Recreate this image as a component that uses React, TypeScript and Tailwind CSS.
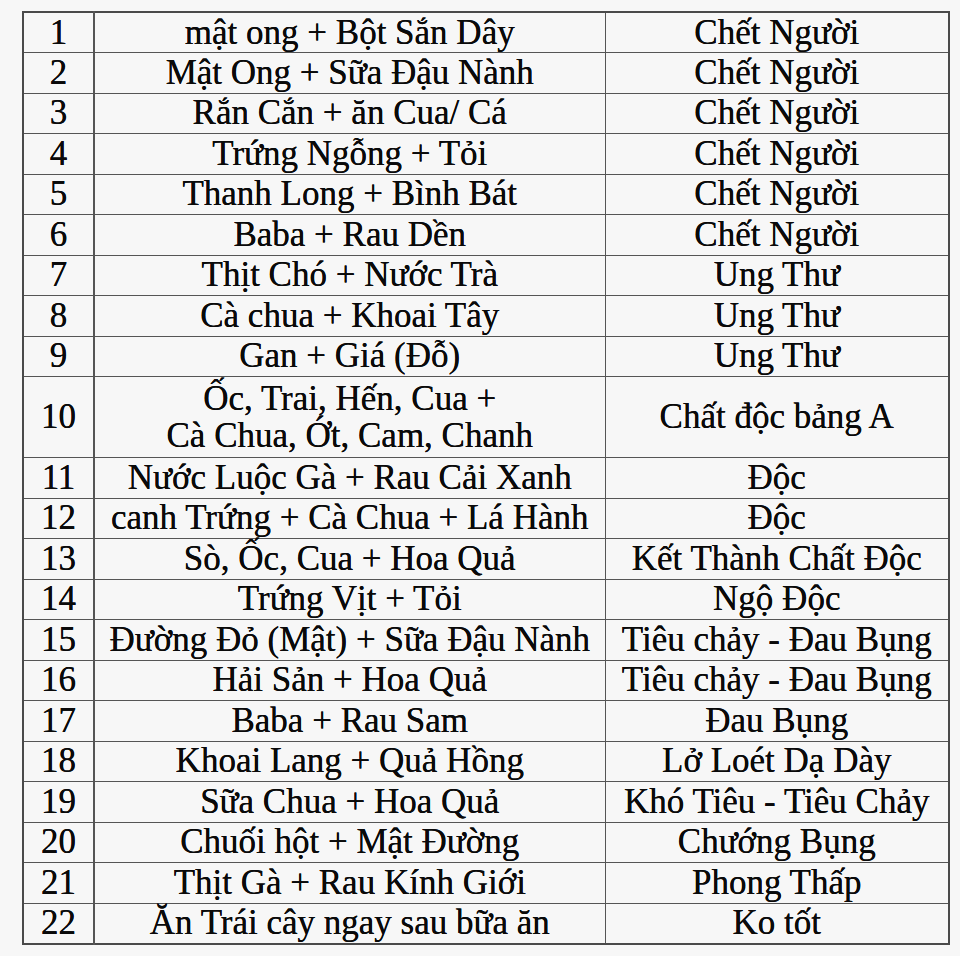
const rows: [string, string[], string][] = [
  ["1", ["mật ong + Bột Sắn Dây"], "Chết Người"],
  ["2", ["Mật Ong + Sữa Đậu Nành"], "Chết Người"],
  ["3", ["Rắn Cắn + ăn Cua/ Cá"], "Chết Người"],
  ["4", ["Trứng Ngỗng + Tỏi"], "Chết Người"],
  ["5", ["Thanh Long + Bình Bát"], "Chết Người"],
  ["6", ["Baba + Rau Dền"], "Chết Người"],
  ["7", ["Thịt Chó + Nước Trà"], "Ung Thư"],
  ["8", ["Cà chua + Khoai Tây"], "Ung Thư"],
  ["9", ["Gan + Giá (Đỗ)"], "Ung Thư"],
  ["10", ["Ốc, Trai, Hến, Cua +", "Cà Chua, Ớt, Cam, Chanh"], "Chất độc bảng A"],
  ["11", ["Nước Luộc Gà + Rau Cải Xanh"], "Độc"],
  ["12", ["canh Trứng + Cà Chua + Lá Hành"], "Độc"],
  ["13", ["Sò, Ốc, Cua + Hoa Quả"], "Kết Thành Chất Độc"],
  ["14", ["Trứng Vịt + Tỏi"], "Ngộ Độc"],
  ["15", ["Đường Đỏ (Mật) + Sữa Đậu Nành"], "Tiêu chảy - Đau Bụng"],
  ["16", ["Hải Sản + Hoa Quả"], "Tiêu chảy - Đau Bụng"],
  ["17", ["Baba + Rau Sam"], "Đau Bụng"],
  ["18", ["Khoai Lang + Quả Hồng"], "Lở Loét Dạ Dày"],
  ["19", ["Sữa Chua + Hoa Quả"], "Khó Tiêu - Tiêu Chảy"],
  ["20", ["Chuối hột + Mật Đường"], "Chướng Bụng"],
  ["21", ["Thịt Gà + Rau Kính Giới"], "Phong Thấp"],
  ["22", ["Ăn Trái cây ngay sau bữa ăn"], "Ko tốt"],
];

export default function App() {
  return (
    <main className="w-[960px] h-[956px] bg-[#f7f7f7] pt-[11px] pl-[22px] font-['Liberation_Serif',serif] text-[#0a0a0a] [text-shadow:0_0_0.6px_#000]">
      <table className="table-fixed border-collapse border-2 border-[#4a4a4a] text-[35px] leading-[34px]">
        <colgroup>
          <col className="w-[71px]" />
          <col className="w-[511px]" />
          <col className="w-[344px]" />
        </colgroup>
        <tbody>
          {rows.map(([num, food, result]) => (
            <tr key={num} className={food.length > 1 ? "h-[81px]" : "h-[40.5px]"}>
              <td className="border border-[#555] border-r-2 text-center p-0 align-middle whitespace-nowrap">{num}</td>
              <td className="border border-[#555] text-center p-0 align-middle whitespace-nowrap">
                {food.map((line) => (
                  <div key={line} className={food.length > 1 ? "leading-[37px]" : ""}>
                    {line}
                  </div>
                ))}
              </td>
              <td className="border border-[#555] text-center p-0 align-middle whitespace-nowrap">{result}</td>
            </tr>
          ))}
        </tbody>
      </table>
    </main>
  );
}
